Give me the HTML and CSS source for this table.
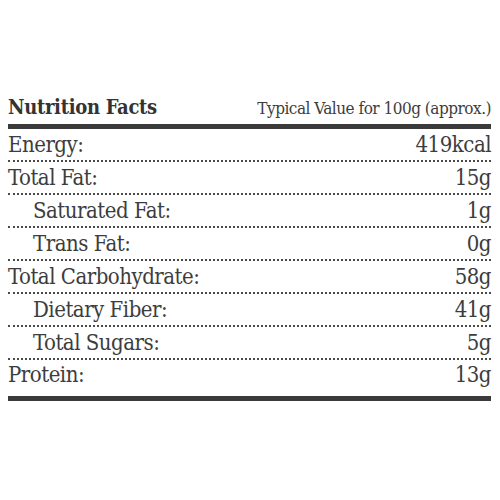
FILE: index.html
```html
<!DOCTYPE html>
<html lang="en">
<head>
  <meta charset="UTF-8">
  <title>Nutrition Facts</title>
  <link rel="stylesheet" href="styles.css">
</head>
<body>
  <div class="label">
    <div class="head">
      <h1>Nutrition Facts</h1>
      <span class="per">Typical Value for 100g (approx.)</span>
    </div>

    <div class="row"><span>Energy:</span><span>419kcal</span></div>
    <div class="row"><span>Total Fat:</span><span>15g</span></div>
    <div class="row sub"><span>Saturated Fat:</span><span>1g</span></div>
    <div class="row sub"><span>Trans Fat:</span><span>0g</span></div>
    <div class="row"><span>Total Carbohydrate:</span><span>58g</span></div>
    <div class="row sub"><span>Dietary Fiber:</span><span>41g</span></div>
    <div class="row sub"><span>Total Sugars:</span><span>5g</span></div>
    <div class="row last"><span>Protein:</span><span>13g</span></div>
  </div>
</body>
</html>
```

FILE: styles.css
```css
* { box-sizing: border-box; }
body {
  margin: 0;
  background: #fff;
  color: #3d3d3d;
  font-family: "DejaVu Serif", "Liberation Serif", serif;
  font-stretch: condensed;
}

.label {
  padding: 95px 9px 0 8px;
}

.head {
  display: flex;
  justify-content: space-between;
  align-items: baseline;
  border-bottom: 5px solid #3a3a3a;
  padding-bottom: 5px;
}
.head h1 {
  margin: 0;
  font-size: 20px;
  font-weight: bold;
  color: #333;
  letter-spacing: -0.3px;
}
.per {
  font-size: 17px;
  letter-spacing: -0.5px;
}

.row {
  display: flex;
  justify-content: space-between;
  align-items: flex-end;
  height: 33px;
  padding-bottom: 3px;
  border-bottom: 2px dotted #4a4a4a;
  font-size: 22px;
  letter-spacing: -0.5px;
}
.row.sub { padding-left: 25px; }
.row.last {
  height: 41px;
  padding-bottom: 9px;
  border-bottom: 5px solid #3a3a3a;
}
```
